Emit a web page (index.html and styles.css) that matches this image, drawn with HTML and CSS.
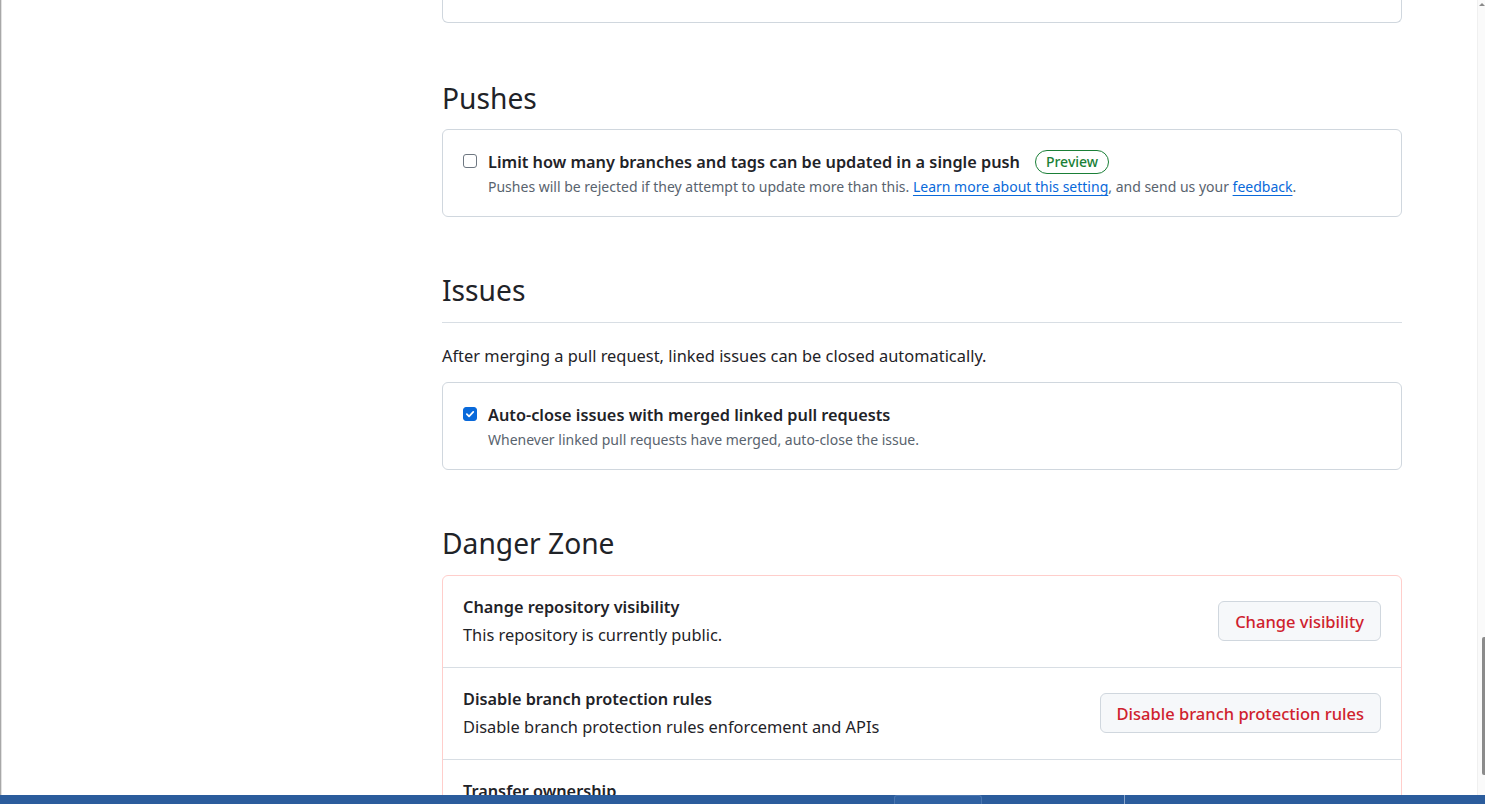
FILE: index.html
```html
<!DOCTYPE html>
<html lang="en">
<head>
<meta charset="utf-8">
<title>Settings</title>
<link rel="stylesheet" href="styles.css">
</head>
<body>
<div class="screen">
  <div class="edge"></div>
  <div class="viewport">
    <main class="content">
      <div class="box box-cut"></div>

      <h2 class="subhead subhead-first">Pushes</h2>
      <div class="box option">
        <span class="checkbox"></span>
        <div class="option-text">
          <div class="option-title">Limit how many branches and tags can be updated in a single push <span class="badge">Preview</span></div>
          <div class="note">Pushes will be rejected if they attempt to update more than this. <a href="#">Learn more about this setting</a>, and send us your <a href="#">feedback</a>.</div>
        </div>
      </div>

      <h2 class="subhead subhead-border">Issues</h2>
      <p class="lead">After merging a pull request, linked issues can be closed automatically.</p>
      <div class="box option">
        <span class="checkbox checked">
          <svg viewBox="0 0 14 14" width="14" height="14"><path d="M3.3 7.2 L5.9 9.8 L10.8 4.6" fill="none" stroke="#fff" stroke-width="2" stroke-linecap="round" stroke-linejoin="round"/></svg>
        </span>
        <div class="option-text">
          <div class="option-title">Auto-close issues with merged linked pull requests</div>
          <div class="note">Whenever linked pull requests have merged, auto-close the issue.</div>
        </div>
      </div>

      <h2 class="subhead subhead-danger">Danger Zone</h2>
      <div class="box danger">
        <div class="danger-row">
          <div class="danger-text">
            <div class="danger-title">Change repository visibility</div>
            <div class="danger-desc">This repository is currently public.</div>
          </div>
          <button class="btn-danger">Change visibility</button>
        </div>
        <div class="danger-row">
          <div class="danger-text">
            <div class="danger-title">Disable branch protection rules</div>
            <div class="danger-desc">Disable branch protection rules enforcement and APIs</div>
          </div>
          <button class="btn-danger">Disable branch protection rules</button>
        </div>
        <div class="danger-row">
          <div class="danger-text">
            <div class="danger-title">Transfer ownership</div>
            <div class="danger-desc">Transfer this repository to another user or to an organization where you have the ability to create repositories.</div>
          </div>
        </div>
      </div>
    </main>
  </div>
  <div class="scrollbar">
    <span class="scroll-arrow"></span>
    <span class="scroll-thumb"></span>
  </div>
</div>
<div class="taskbar">
  <span class="task-item"></span>
  <span class="task-sep"></span>
</div>
</body>
</html>
```

FILE: styles.css
```css
html, body {
  margin: 0;
  padding: 0;
  height: 100%;
  overflow: hidden;
  background: #ffffff;
}

body {
  font-family: "Segoe UI", "Noto Sans", "Open Sans", sans-serif;
  color: #1f2328;
}

.screen {
  display: flex;
  height: 804px;
  overflow: hidden;
}

.edge {
  width: 2px;
  flex: none;
  background: linear-gradient(to right, #a8a8a8 0, #a8a8a8 1px, #e2e2e2 1px, #e2e2e2 2px);
}

.viewport {
  flex: 1;
  overflow: hidden;
}

.content {
  width: 960px;
  margin-left: 440px;
}

.box {
  border: 1px solid #d0d7de;
  border-radius: 6px;
  box-sizing: border-box;
}

.box-cut {
  height: 23px;
  border-top: none;
  border-top-left-radius: 0;
  border-top-right-radius: 0;
}

.subhead {
  margin: 0;
  font-size: 28.2px;
  font-weight: 400;
  line-height: 36px;
  color: #1f2328;
}

.subhead-first {
  margin-top: 57px;
  margin-bottom: 13px;
}

.subhead-border {
  margin-top: 55px;
  padding-bottom: 14px;
  border-bottom: 1px solid #d8dee4;
}

.subhead-danger {
  margin-top: 55px;
  margin-bottom: 14px;
}

.lead {
  margin: 21px 0 14px;
  font-size: 16.4px;
  line-height: 24px;
}

.option {
  display: flex;
  align-items: flex-start;
  gap: 11px;
  padding: 20px 20px 19px;
}

.checkbox {
  flex: none;
  width: 14px;
  height: 14px;
  margin-top: 4px;
  box-sizing: border-box;
  border: 1px solid #6e7781;
  border-radius: 3px;
  background: #fff;
  display: flex;
  align-items: center;
  justify-content: center;
}

.checkbox.checked {
  background: #0969da;
  border-color: #0969da;
}

.checkbox svg {
  display: block;
}

.option-title {
  font-size: 16.3px;
  font-weight: 600;
  line-height: 24px;
  display: flex;
  align-items: center;
  gap: 15px;
}

.badge {
  display: inline-flex;
  align-items: center;
  height: 24px;
  padding: 0 10px;
  border: 1px solid #1a7f37;
  border-radius: 12px;
  color: #1a7f37;
  font-size: 14px;
  font-weight: 500;
  box-sizing: border-box;
}

.note {
  margin-top: 3px;
  font-size: 14px;
  line-height: 20px;
  color: #59636e;
}

.note a {
  color: #0969da;
  text-decoration: underline;
  text-underline-offset: 3px;
}

.danger {
  border-color: #ffcecb;
}

.danger-row {
  display: flex;
  align-items: center;
  justify-content: space-between;
  padding: 18px 20px 19px;
  border-top: 1px solid #d8dee4;
}

.danger-row:first-child {
  border-top: none;
}

.danger-text {
  display: flex;
  flex-direction: column;
}

.danger-title {
  font-size: 16.3px;
  font-weight: 600;
  line-height: 26px;
}

.danger-desc {
  margin-top: 2px;
  font-size: 16.4px;
  line-height: 26px;
}

.btn-danger {
  flex: none;
  height: 40px;
  padding: 0 16px;
  border: 1px solid #d0d7de;
  border-radius: 6px;
  background: #f6f8fa;
  color: #cf222e;
  font-family: inherit;
  font-size: 16.5px;
  font-weight: 500;
}

.scrollbar {
  flex: none;
  width: 7px;
  background: #fafafa;
  border-left: 1px solid #f0f0f0;
  display: flex;
  flex-direction: column;
  align-items: flex-end;
}

.scroll-arrow {
  width: 0;
  height: 0;
  margin-top: 3px;
  border-left: 3px solid transparent;
  border-right: 3px solid transparent;
  border-bottom: 3px solid #8a8a8a;
}

.scroll-thumb {
  width: 3px;
  height: 138px;
  margin-top: 631px;
  border-radius: 2px 0 0 2px;
  background: #8b8b8b;
}

.taskbar {
  position: fixed;
  left: 0;
  right: 0;
  bottom: 0;
  height: 9px;
  background: #2b5c9c;
  display: flex;
  align-items: flex-start;
}

.task-item {
  width: 88px;
  height: 9px;
  margin-left: 894px;
  box-sizing: border-box;
  border: 1px solid #4a76b0;
  border-bottom: none;
  border-radius: 3px 3px 0 0;
  background: #2f61a2;
}

.task-sep {
  width: 1px;
  height: 9px;
  margin-left: 142px;
  background: #8aa6cc;
}
```
